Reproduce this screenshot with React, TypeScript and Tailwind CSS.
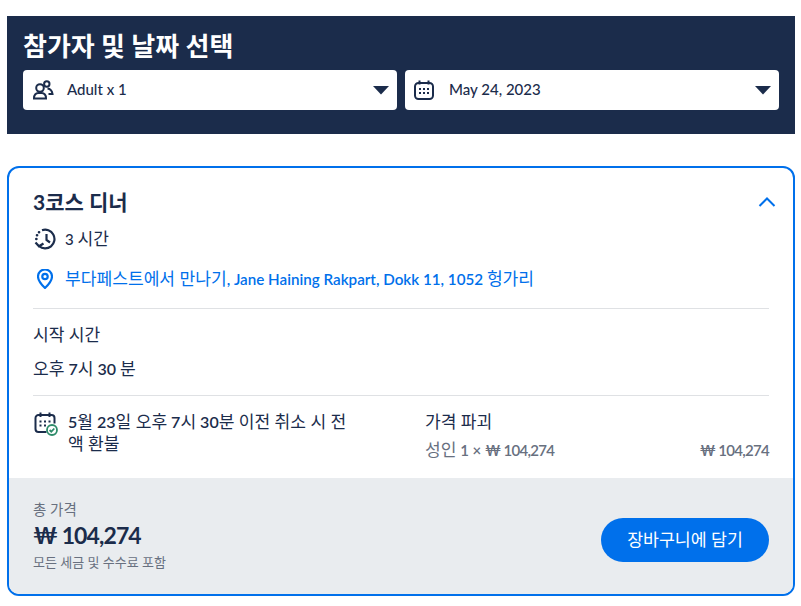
import React from "react";

const font = "font-['Lato','Noto_Sans_CJK_KR',sans-serif]";

function K({ children }: { children: React.ReactNode }) {
  return <span className="text-[17.1px] font-normal">{children}</span>;
}

function Caret() {
  return (
    <svg width="16" height="9" viewBox="0 0 16 9" className="shrink-0">
      <path d="M0 0H16L8 8.500Z" fill="#1b2c4b" />
    </svg>
  );
}

function PeopleIcon() {
  return (
    <svg width="22" height="22" viewBox="0 0 22 22" fill="none" stroke="#1b2c4b" strokeWidth="2" className="shrink-0">
      <circle cx="8" cy="9" r="3.800" />
      <circle cx="14.800" cy="5" r="2.700" />
      <path d="M2 19.500c0-3.500 2-5.500 4.500-5.500h3c2.500 0 4.500 2 4.500 5.500z" />
      <path d="M15.500 9.500c2.500.3 4.500 2 5 5.500h-4" />
    </svg>
  );
}

function CalIcon() {
  return (
    <svg width="20" height="20" viewBox="0 0 20 20" fill="none" className="shrink-0">
      <rect x="1" y="3" width="18" height="16" rx="3.500" stroke="#1b2c4b" strokeWidth="2" />
      <path d="M5.500 0.500V4.500M14.500 0.500V4.500" stroke="#1b2c4b" strokeWidth="2" />
      <path d="M5 9h2M9 9h2M13 9h2M5 13h2M9 13h2M13 13h2" stroke="#1b2c4b" strokeWidth="1.800" />
    </svg>
  );
}

function Select({ icon, label }: { icon: React.ReactNode; label: string }) {
  return (
    <div className="flex h-10 flex-1 items-center rounded-[4px] bg-white pl-[9px] pr-[8px]">
      <div className="flex w-[35px] justify-start">{icon}</div>
      <span className="mt-[-2px] flex-1 text-[15px] font-medium text-[#1b2c4b]">{label}</span>
      <Caret />
    </div>
  );
}

export default function App() {
  return (
    <div className={`${font} w-[801px] h-[606px] bg-white px-[7px] pt-4 overflow-hidden`}>
      <div className="flex h-[118px] w-[788px] flex-col bg-[#1b2c4b] px-4 pt-[12px]">
        <h1 className="h-[42px] text-[26px] font-bold leading-[36px] text-white">참가자 및 날짜 선택</h1>
        <div className="flex gap-2">
          <Select icon={<PeopleIcon />} label="Adult x 1" />
          <Select icon={<CalIcon />} label="May 24, 2023" />
        </div>
      </div>

      <div className="mt-8 flex h-[430px] w-[788px] flex-col overflow-hidden rounded-[12px] border-2 border-[#0070eb]">
        <div className="flex flex-1 flex-col px-6 pt-[20px]">
          <div className="flex h-[28px] items-center justify-between">
            <h2 className="text-[21px] font-bold leading-[28px] text-[#1b2c4b]">3코스 디너</h2>
            <svg width="18" height="10" viewBox="0 0 18 10" fill="none" stroke="#0070eb" strokeWidth="2" className="mr-[-7px]">
              <path d="M1.500 9L9 1.500L16.500 9" />
            </svg>
          </div>
          <div className="mt-[11px] flex h-[24px] items-center gap-[8px] text-[15px] font-medium leading-[24px] text-[#1b2c4b]">
            <svg width="23" height="22" viewBox="0 0 23 22" fill="none" stroke="#1b2c4b" strokeWidth="2.200" className="ml-[1px] shrink-0">
              <path d="M8 2.300A9.300 9.300 0 1 1 5 18" />
              <path d="M12.500 6v6l3.500 2.500" />
              <path d="M1.500 14.500l3.500 3.800 4.500-2.800" />
              <path d="M2.300 11h.1M3 7.300h.1M5 4.300h.1" strokeWidth="2.600" strokeLinecap="round" />
            </svg>
            <span>3 <K>시간</K></span>
          </div>
          <div className="mt-[16px] flex h-[24px] items-center gap-[12px] text-[15.200px] font-semibold leading-[24px] text-[#0070eb]">
            <svg width="16" height="20" viewBox="0 0 16 20" fill="none" stroke="#0070eb" strokeWidth="2.200" className="ml-[4px] shrink-0">
              <path d="M8 19s-7-6.500-7-11.500a7 7 0 0 1 14 0C15 12.500 8 19 8 19z" />
              <circle cx="8" cy="7.500" r="2.700" />
            </svg>
            <span><K>부다페스트에서 만나기</K>, Jane Haining Rakpart, Dokk 11, 1052 <K>헝가리</K></span>
          </div>
          <div className="mt-[17px] border-t border-[#dfe1e4]" />
          <div className="mt-[14px] leading-[24px] text-[#1b2c4b]"><K>시작 시간</K></div>
          <div className="mt-[10px] text-[16px] font-semibold leading-[24px] text-[#1b2c4b]"><K>오후</K> 7<K>시</K> 30 <K>분</K></div>
          <div className="mt-[14px] border-t border-[#dfe1e4]" />
          <div className="mt-[15px] flex">
            <div className="flex w-[392px] gap-[10px] pl-[1px]">
              <svg width="24" height="24" viewBox="0 0 24 24" fill="none" className="mt-[1px] shrink-0">
                <path d="M12.500 20H4.500a3 3 0 0 1-3-3V6a3 3 0 0 1 3-3h13a3 3 0 0 1 3 3v5.500" stroke="#1b2c4b" strokeWidth="2" />
                <path d="M6.500 .500V5M15.500 .500V5" stroke="#1b2c4b" strokeWidth="2" />
                <path d="M5.500 9.500h2M10 9.500h2M14.500 9.500h2M5.500 13.500h2M10 13.500h2" stroke="#1b2c4b" strokeWidth="1.800" />
                <circle cx="18" cy="18" r="5" stroke="#2e8b6a" strokeWidth="1.800" fill="white" />
                <path d="M15.600 18l1.700 1.700 3-3.200" stroke="#2e8b6a" strokeWidth="1.800" />
              </svg>
              <p className="text-[16px] font-semibold leading-[22px] text-[#1b2c4b]">5<K>월</K> 23<K>일 오후</K> 7<K>시</K> 30<K>분 이전 취소 시 전</K><br /><K>액 환불</K></p>
            </div>
            <div className="flex flex-1 flex-col">
              <div className="leading-[22px] text-[#1b2c4b]"><K>가격 파괴</K></div>
              <div className="mt-[6px] flex justify-between text-[15px] font-semibold leading-[22px] text-[#68707f]">
                <span><K>성인</K> 1 × <span className="tracking-[-0.7px]">₩ 104,274</span></span>
                <span className="tracking-[-0.7px]">₩ 104,274</span>
              </div>
            </div>
          </div>
        </div>
        <div className="flex h-[116px] items-center justify-between bg-[#e9ecef] px-6">
          <div className="flex flex-col">
            <span className="text-[14.500px] leading-[18px] text-[#68707f]">총 가격</span>
            <span className="text-[23px] font-bold leading-[32px] tracking-[-0.900px] text-[#1b2c4b]">₩ 104,274</span>
            <span className="mt-[2px] text-[13px] leading-[18px] text-[#68707f]">모든 세금 및 수수료 포함</span>
          </div>
          <button className="mt-2 flex h-11 w-[168px] items-center justify-center rounded-full bg-[#0070eb] text-[17.300px] text-white">장바구니에 담기</button>
        </div>
      </div>
    </div>
  );
}
